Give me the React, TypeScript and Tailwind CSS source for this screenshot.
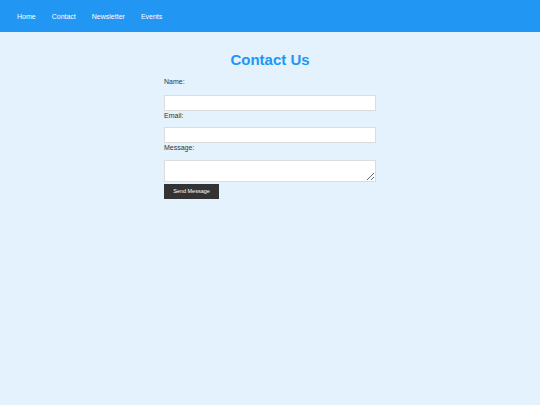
export default function App() {
  const font = { fontFamily: '"Liberation Sans", Arial, sans-serif' };
  return (
    <div className="min-h-[405px] bg-[#e3f2fd] font-['Liberation_Sans',Arial,sans-serif]" style={font}>
      <nav className="flex h-8 items-center bg-[#2196f3] pl-[9px]">
        {["Home", "Contact", "Newsletter", "Events"].map((item) => (
          <a key={item} href="#" className="px-2 text-[7px] leading-none text-white">
            {item}
          </a>
        ))}
      </nav>
      <div className="mx-auto w-[212px] pt-[19px]">
        <h1 className="text-center text-[15px] font-bold leading-[18px] text-[#2196f3]">Contact Us</h1>
        <form className="mt-[8px] flex flex-col">
          <label className="text-[7px] leading-[10px] text-[#333]">Name:</label>
          <input className="mt-[8px] h-4 w-full border border-[#dcdcdc] bg-white" />
          <label className="text-[7px] leading-[9px] text-[#333]">Email:</label>
          <input className="mt-[7px] h-4 w-full border border-[#dcdcdc] bg-white" />
          <label className="text-[7px] leading-[9px] text-[#333]">Message:</label>
          <textarea className="mt-[8px] h-[22px] w-full border border-[#dcdcdc] bg-white" />
          <button
            type="button"
            className="mt-[2px] h-[15px] w-[55px] bg-[#333] text-[5.5px] leading-none text-white"
          >
            Send Message
          </button>
        </form>
      </div>
    </div>
  );
}
